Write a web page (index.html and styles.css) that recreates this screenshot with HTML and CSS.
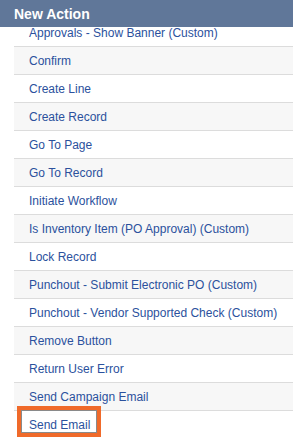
FILE: index.html
```html
<!DOCTYPE html>
<html lang="en">
<head>
   <meta charset="UTF-8">
   <meta name="viewport" content="width=device-width, initial-scale=1.0">
   <title>New Action</title>
   <link rel="stylesheet" href="styles.css">
</head>
<body>
   <div class="panel">
      <h1 class="panel-title">New Action</h1>
      <ul class="actions">
         <li class="first"><a href="#">Approvals - Show Banner (Custom)</a></li>
         <li><a href="#">Confirm</a></li>
         <li><a href="#">Create Line</a></li>
         <li><a href="#">Create Record</a></li>
         <li><a href="#">Go To Page</a></li>
         <li><a href="#">Go To Record</a></li>
         <li><a href="#">Initiate Workflow</a></li>
         <li><a href="#">Is Inventory Item (PO Approval) (Custom)</a></li>
         <li><a href="#">Lock Record</a></li>
         <li><a href="#">Punchout - Submit Electronic PO (Custom)</a></li>
         <li><a href="#">Punchout - Vendor Supported Check (Custom)</a></li>
         <li><a href="#">Remove Button</a></li>
         <li><a href="#">Return User Error</a></li>
         <li><a href="#">Send Campaign Email</a></li>
         <li class="picked"><a href="#">Send Email</a><span class="callout"></span></li>
      </ul>
   </div>
</body>
</html>
```

FILE: styles.css
```css
* {
   margin: 0;
   padding: 0;
   box-sizing: border-box;
   font-family: "Liberation Sans", Arial, Helvetica, sans-serif;
}
body {
   background-color: #fff;
   overflow: hidden;
}
div.panel {
   height: 438px;
   overflow: hidden;
}
.panel-title {
   position: relative;
   z-index: 1;
   height: 27px;
   padding: 6px 14px 0;
   background-color: #607799;
   color: #fff;
   font-size: 14px;
   font-weight: bold;
   line-height: 16px;
}
ul.actions {
   list-style: none;
   margin: -8px 0 0 14px;
}
ul.actions li {
   position: relative;
   height: 28px;
   padding: 0 0 0 15px;
   border-bottom: 1px solid #dcdcdc;
   font-size: 12px;
   line-height: 28px;
}
ul.actions li:nth-child(even) {
   background-color: #f7f7f7;
}
ul.actions a {
   color: #2b519d;
   text-decoration: none;
}
.callout {
   position: absolute;
   left: 3px;
   top: -5px;
   width: 84px;
   height: 31px;
   border: 4px solid #f06a2a;
   box-shadow: inset 0 0 0 1px #8a8a8a;
}
```
